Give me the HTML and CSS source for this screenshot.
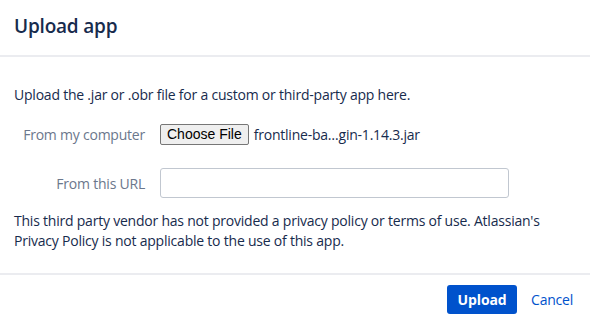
FILE: index.html
```html
<!DOCTYPE html>
<html>
<head>
<meta charset="utf-8">
<link rel="stylesheet" href="styles.css">
</head>
<body>
<div class="dialog">
  <header class="dialog-header">
    <h2 class="dialog-title">Upload app</h2>
  </header>
  <main class="dialog-body">
    <p class="intro">Upload the .jar or .obr file for a custom or third-party app here.</p>
    <div class="field-row file-row">
      <label class="field-label">From my computer</label>
      <div class="file-control">
        <button class="file-button" type="button">Choose File</button>
        <span class="file-name">frontline-ba…gin-1.14.3.jar</span>
      </div>
    </div>
    <div class="field-row url-row">
      <label class="field-label">From this URL</label>
      <input class="text-input" type="text">
    </div>
    <p class="notice">This third party vendor has not provided a privacy policy or terms of use. Atlassian's Privacy Policy is not applicable to the use of this app.</p>
  </main>
  <footer class="dialog-footer">
    <button class="btn-primary" type="button">Upload</button>
    <a class="btn-link" href="#">Cancel</a>
  </footer>
</div>
</body>
</html>
```

FILE: styles.css
```css
* { box-sizing: border-box; }
html, body { margin: 0; padding: 0; background: #fff; }
body {
  font-family: "Open Sans", "Noto Sans", sans-serif;
  font-size: 14px;
  letter-spacing: -0.22px;
  color: #172B4D;
}
.dialog { width: 590px; height: 323px; display: flex; flex-direction: column; }
.dialog-header {
  height: 57px;
  border-bottom: 2px solid #ebecf0;
  padding: 0 14px;
  display: flex;
  align-items: center;
}
.dialog-title {
  margin: 0;
  font-size: 19px;
  font-weight: 600;
  letter-spacing: -0.2px;
  color: #172B4D;
  line-height: 24px;
  padding-bottom: 3px;
}
.dialog-body {
  padding: 28px 14px 0;
  height: 218px;
  border-bottom: 2px solid #ebecf0;
}
.intro { margin: 0; line-height: 20px; }
.field-row { display: flex; align-items: center; }
.file-row { margin-top: 17px; height: 24px; }
.url-row { margin-top: 22px; height: 30px; }
.field-label {
  width: 131px;
  text-align: right;
  color: #6B778C;
  margin-right: 14px;
  flex: none;
}
.file-control { display: flex; align-items: center; margin-left: 1px; }
.file-button {
  font-family: "Liberation Sans", Arial, sans-serif;
  font-size: 14px;
  letter-spacing: 0;
  color: #000;
  background: #efefef;
  border: 1px solid #767676;
  border-radius: 2px;
  padding: 1px 6px;
  height: 21px;
  line-height: 17px;
  margin-right: 5px;
}
.file-name { color: #172B4D; }
.text-input {
  margin-left: 1px;
  width: 349px;
  height: 30px;
  border: 1px solid #c1c7d0;
  border-radius: 3px;
  background: #fff;
}
.notice { margin: 13px 0 0; line-height: 20px; }
.dialog-footer {
  display: flex;
  justify-content: flex-end;
  align-items: center;
  padding: 10px 17px 0 0;
  gap: 14px;
}
.btn-primary {
  font-family: inherit;
  font-size: 14px;
  font-weight: 700;
  letter-spacing: -0.1px;
  color: #fff;
  background: #0052CC;
  border: none;
  border-radius: 3px;
  width: 70px;
  height: 29px;
  padding: 0;
}
.btn-link {
  color: #0052CC;
  text-decoration: none;
}
```
